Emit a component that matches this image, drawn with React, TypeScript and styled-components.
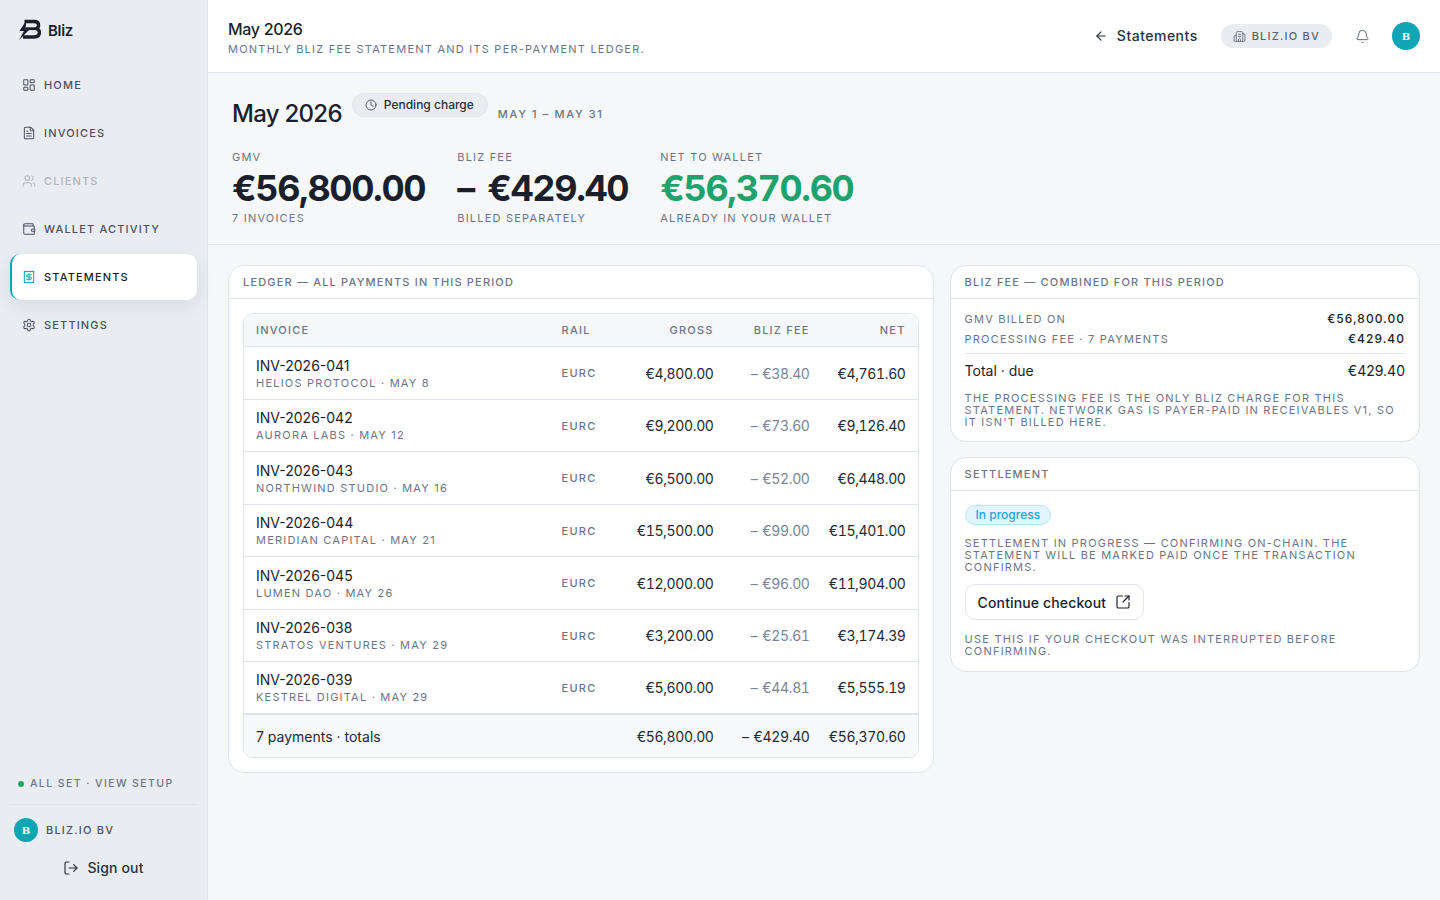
import styled, { createGlobalStyle } from "styled-components";
import {
  ArrowLeft,
  Bell,
  Building2,
  Clock,
  FileText,
  LayoutDashboard,
  LogOut,
  Receipt,
  Settings,
  SquareArrowOutUpRight,
  Users,
  Wallet,
} from "lucide-react";

const ink = "#1a1f2b";
const muted = "#6b7587";
const line = "#dfe4ec";
const teal = "#0ea5b5";
const sans = `"Inter", "Liberation Sans", sans-serif`;

const GlobalStyle = createGlobalStyle`
  html, body { margin: 0; height: 100%; }
  body {
    background: #f5f7f9;
    color: ${ink};
    font-family: ${sans};
    -webkit-font-smoothing: antialiased;
  }
  * { box-sizing: border-box; }
`;

const navItems = [
  { label: "Home", Icon: LayoutDashboard },
  { label: "Invoices", Icon: FileText },
  { label: "Clients", Icon: Users, disabled: true },
  { label: "Wallet activity", Icon: Wallet },
  { label: "Statements", Icon: Receipt, active: true },
  { label: "Settings", Icon: Settings },
];

const ledger = [
  ["INV-2026-041", "Helios Protocol · May 8", "€4,800.00", "– €38.40", "€4,761.60"],
  ["INV-2026-042", "Aurora Labs · May 12", "€9,200.00", "– €73.60", "€9,126.40"],
  ["INV-2026-043", "Northwind Studio · May 16", "€6,500.00", "– €52.00", "€6,448.00"],
  ["INV-2026-044", "Meridian Capital · May 21", "€15,500.00", "– €99.00", "€15,401.00"],
  ["INV-2026-045", "Lumen DAO · May 26", "€12,000.00", "– €96.00", "€11,904.00"],
  ["INV-2026-038", "Stratos Ventures · May 29", "€3,200.00", "– €25.61", "€3,174.39"],
  ["INV-2026-039", "Kestrel Digital · May 29", "€5,600.00", "– €44.81", "€5,555.19"],
];

const stats = [
  { label: "GMV", value: "€56,800.00", note: "7 invoices" },
  { label: "Bliz fee", value: "– €429.40", note: "Billed separately" },
  { label: "Net to wallet", value: "€56,370.60", note: "Already in your wallet", green: true },
];

const Logo = () => (
  <svg width="24" height="22" viewBox="0 0 24 22" fill="none">
    <path
      d="M6.5 2.5H16c3 0 4.6 1.4 4.6 3.7 0 1.7-1 2.9-2.4 3.4 2 .5 3.2 1.9 3.2 3.9 0 3-2.1 4.5-5.4 4.5H5"
      stroke="#1a1f2b"
      strokeWidth="3.4"
      strokeLinejoin="round"
    />
    <path d="M7.5 9.7H17" stroke="#1a1f2b" strokeWidth="2.8" />
    <path d="M8.5 1 1.5 12h4.5L1 21l11-11H7.5z" fill="#1a1f2b" />
  </svg>
);

export default function App() {
  return (
    <>
      <GlobalStyle />
      <Shell>
        <Sidebar>
          <Brand>
            <Logo />
            <BrandName>Bliz</BrandName>
          </Brand>
          <Nav>
            {navItems.map(({ label, Icon, active, disabled }) => (
              <NavItem key={label} $active={active} $disabled={disabled}>
                <Icon size={14} strokeWidth={1.75} />
                {label}
              </NavItem>
            ))}
          </Nav>
          <SetupLink>
            <GreenDot />
            All set · View setup
          </SetupLink>
          <SidebarFoot>
            <OrgRow>
              <Avatar>B</Avatar>
              <OrgName>BLIZ.IO BV</OrgName>
            </OrgRow>
            <SignOut>
              <LogOut size={16} strokeWidth={1.75} />
              Sign out
            </SignOut>
          </SidebarFoot>
        </Sidebar>
        <Main>
          <TopBar>
            <TopHeading>
              <TopTitle>May 2026</TopTitle>
              <TopSub>Monthly Bliz fee statement and its per-payment ledger.</TopSub>
            </TopHeading>
            <TopActions>
              <BackLink>
                <ArrowLeft size={14} strokeWidth={2} />
                Statements
              </BackLink>
              <OrgPill>
                <Building2 size={13} strokeWidth={1.5} />
                BLIZ.IO BV
              </OrgPill>
              <BellButton>
                <Bell size={15} strokeWidth={1.5} />
              </BellButton>
              <TopAvatar>B</TopAvatar>
            </TopActions>
          </TopBar>
          <Hero>
            <HeroHead>
              <HeroTitle>May 2026</HeroTitle>
              <PendingPill>
                <Clock size={12} strokeWidth={1.5} />
                Pending charge
              </PendingPill>
              <Period>May 1 – May 31</Period>
            </HeroHead>
            <Stats>
              {stats.map((s) => (
                <div key={s.label}>
                  <Caps>{s.label}</Caps>
                  <StatValue $green={s.green}>{s.value}</StatValue>
                  <Caps>{s.note}</Caps>
                </div>
              ))}
            </Stats>
          </Hero>
          <Content>
            <Card>
              <CardHead>Ledger — all payments in this period</CardHead>
              <LedgerBody>
                <LedgerTable>
                  <colgroup>
                    <col />
                    <RailCol />
                    <GrossCol />
                    <MoneyCol />
                    <MoneyCol />
                  </colgroup>
                  <thead>
                    <tr>
                      <Th>Invoice</Th>
                      <Th>Rail</Th>
                      <Th $right>Gross</Th>
                      <Th $right>Bliz fee</Th>
                      <Th $right>Net</Th>
                    </tr>
                  </thead>
                  <tbody>
                    {ledger.map(([id, client, gross, fee, net]) => (
                      <tr key={id}>
                        <InvoiceCell>
                          <InvoiceId>{id}</InvoiceId>
                          <InvoiceSub>{client}</InvoiceSub>
                        </InvoiceCell>
                        <RailCell>EURC</RailCell>
                        <MoneyCell>{gross}</MoneyCell>
                        <MoneyCell $muted>{fee}</MoneyCell>
                        <MoneyCell>{net}</MoneyCell>
                      </tr>
                    ))}
                  </tbody>
                  <tfoot>
                    <tr>
                      <FootCell colSpan={2}>7 payments · totals</FootCell>
                      <FootMoney>€56,800.00</FootMoney>
                      <FootMoney>– €429.40</FootMoney>
                      <FootMoney>€56,370.60</FootMoney>
                    </tr>
                  </tfoot>
                </LedgerTable>
              </LedgerBody>
            </Card>
            <SideColumn>
              <Card>
                <CardHead>Bliz fee — combined for this period</CardHead>
                <FeeBody>
                  <FeeRow>
                    <Caps>GMV billed on</Caps>
                    <FeeAmount>€56,800.00</FeeAmount>
                  </FeeRow>
                  <FeeRow>
                    <Caps>Processing fee · 7 payments</Caps>
                    <FeeAmount>€429.40</FeeAmount>
                  </FeeRow>
                  <TotalRow>
                    <span>Total · due</span>
                    <span>€429.40</span>
                  </TotalRow>
                  <Note>
                    The processing fee is the only Bliz charge for this statement. Network gas is
                    payer-paid in Receivables V1, so it isn't billed here.
                  </Note>
                </FeeBody>
              </Card>
              <Card>
                <CardHead>Settlement</CardHead>
                <SettleBody>
                  <ProgressPill>In progress</ProgressPill>
                  <Note>
                    Settlement in progress — confirming on-chain. The statement will be marked paid
                    once the transaction confirms.
                  </Note>
                  <CheckoutButton>
                    Continue checkout
                    <SquareArrowOutUpRight size={16} strokeWidth={1.75} />
                  </CheckoutButton>
                  <Note>Use this if your checkout was interrupted before confirming.</Note>
                </SettleBody>
              </Card>
            </SideColumn>
          </Content>
        </Main>
      </Shell>
    </>
  );
}

const Shell = styled.div`
  display: flex;
  min-height: 900px;
`;

const Sidebar = styled.aside`
  width: 208px;
  flex-shrink: 0;
  height: 900px;
  display: flex;
  flex-direction: column;
  padding: 18px 10px 24px;
  background: #e9edf1;
  border-right: 1px solid ${line};
`;

const Brand = styled.div`
  display: flex;
  align-items: center;
  gap: 6px;
  height: 24px;
  padding-left: 8px;
`;

const BrandName = styled.span`
  font-size: 15px;
  font-weight: 600;
  letter-spacing: -0.02em;
`;

const Nav = styled.nav`
  display: flex;
  flex-direction: column;
  gap: 2px;
  margin-top: 20px;
  flex: 1;
`;

const NavItem = styled.div<{ $active?: boolean; $disabled?: boolean }>`
  display: flex;
  align-items: center;
  gap: 8px;
  height: 46px;
  padding-left: ${(p) => (p.$active ? "10px" : "12px")};
  font-size: 11px;
  font-weight: 500;
  letter-spacing: 0.105em;
  text-transform: uppercase;
  border-radius: 10px;
  color: ${(p) => (p.$active ? ink : p.$disabled ? "#adb4c0" : "#4a5160")};
  background: ${(p) => (p.$active ? "#fff" : "transparent")};
  border-left: ${(p) => (p.$active ? `2px solid ${teal}` : "none")};
  box-shadow: ${(p) => (p.$active ? "0 6px 18px rgba(30, 40, 60, 0.08)" : "none")};

  svg {
    color: ${(p) => (p.$active ? teal : "currentColor")};
  }
`;

const SetupLink = styled.div`
  display: flex;
  align-items: center;
  gap: 6px;
  padding-left: 8px;
  margin-bottom: 14px;
  font-size: 10.5px;
  font-weight: 500;
  letter-spacing: 0.135em;
  text-transform: uppercase;
  color: ${muted};
`;

const GreenDot = styled.span`
  width: 6px;
  height: 6px;
  border-radius: 50%;
  background: #1fa868;
`;

const SidebarFoot = styled.div`
  border-top: 1px solid ${line};
  padding-top: 13px;
`;

const OrgRow = styled.div`
  display: flex;
  align-items: center;
  gap: 8px;
  padding-left: 4px;
`;

const Avatar = styled.div`
  width: 24px;
  height: 24px;
  border-radius: 50%;
  display: flex;
  align-items: center;
  justify-content: center;
  background: ${teal};
  color: #fff;
  font-family: "DejaVu Serif", serif;
  font-size: 10px;
  font-weight: 700;
`;

const OrgName = styled.span`
  font-size: 11px;
  font-weight: 500;
  letter-spacing: 0.11em;
  color: #4a5160;
`;

const SignOut = styled.div`
  display: flex;
  align-items: center;
  justify-content: center;
  gap: 8px;
  margin-top: 17px;
  font-size: 14px;
  font-weight: 500;
  letter-spacing: 0.01em;
  color: #2a303c;
`;

const Main = styled.main`
  flex: 1;
  min-width: 0;
`;

const TopBar = styled.header`
  height: 73px;
  display: flex;
  align-items: center;
  justify-content: space-between;
  padding: 0 20px;
  background: #fff;
  border-bottom: 1px solid ${line};
`;

const TopHeading = styled.div`
  padding-top: 2px;
`;

const TopTitle = styled.div`
  font-size: 16px;
  font-weight: 500;
  letter-spacing: -0.02em;
  line-height: 20px;
`;

const TopSub = styled.div`
  margin-top: 3px;
  font-size: 11px;
  letter-spacing: 0.112em;
  line-height: 14px;
  text-transform: uppercase;
  color: ${muted};
`;

const TopActions = styled.div`
  display: flex;
  align-items: center;
`;

const BackLink = styled.div`
  display: flex;
  align-items: center;
  gap: 9px;
  margin: 0 23px 1px 0;
  font-size: 14px;
  font-weight: 500;
  letter-spacing: 0.035em;
  color: #2a303c;
`;

const OrgPill = styled.div`
  display: flex;
  align-items: center;
  gap: 6px;
  height: 24px;
  padding: 0 12px;
  margin-right: 23px;
  border-radius: 12px;
  background: #e9edf1;
  font-size: 11px;
  font-weight: 500;
  letter-spacing: 0.11em;
  color: #5a6373;
`;

const BellButton = styled.div`
  display: flex;
  margin-right: 22px;
  color: #5a6373;
`;

const TopAvatar = styled(Avatar)`
  width: 28px;
  height: 28px;
`;

const Hero = styled.section`
  height: 172px;
  padding: 20px 24px 0;
  border-bottom: 1px solid ${line};
`;

const HeroHead = styled.div`
  display: flex;
  align-items: flex-start;
`;

const HeroTitle = styled.h1`
  margin: 6px 0 1px;
  font-size: 24px;
  font-weight: 500;
  letter-spacing: -0.03em;
  line-height: 30px;
`;

const PendingPill = styled.div`
  display: flex;
  align-items: center;
  gap: 7px;
  height: 24px;
  margin-left: 10px;
  padding: 0 13px 1px 12px;
  border-radius: 12px;
  background: #e9edf1;
  border: 1px solid #e2e6ec;
  font-size: 12px;
  font-weight: 500;
  color: #2a303c;
`;

const Period = styled.div`
  margin: 13px 0 0 10px;
  font-size: 11px;
  font-weight: 500;
  letter-spacing: 0.15em;
  line-height: 16px;
  text-transform: uppercase;
  color: ${muted};
`;

const Stats = styled.div`
  display: flex;
  gap: 32px;
  margin-top: 20px;
`;

const Caps = styled.div`
  font-size: 11px;
  letter-spacing: 0.11em;
  line-height: 14px;
  text-transform: uppercase;
  color: ${muted};
`;

const StatValue = styled.div<{ $green?: boolean }>`
  margin: 3px 0 2px;
  font-size: 36px;
  font-weight: 700;
  font-variant-numeric: tabular-nums;
  letter-spacing: -0.038em;
  word-spacing: 5px;
  line-height: 42px;
  color: ${(p) => (p.$green ? "#1fa26c" : ink)};
`;

const Content = styled.div`
  display: grid;
  grid-template-columns: 1.5fr 1fr;
  gap: 16px;
  align-items: start;
  padding: 20px;
`;

const SideColumn = styled.div`
  display: flex;
  flex-direction: column;
  gap: 15px;
`;

const Card = styled.section`
  background: #fff;
  border: 1px solid ${line};
  border-radius: 16px;
  overflow: hidden;
`;

const CardHead = styled.div`
  height: 33px;
  display: flex;
  align-items: center;
  padding: 0 14px;
  border-bottom: 1px solid ${line};
  font-size: 11px;
  font-weight: 500;
  letter-spacing: 0.107em;
  text-transform: uppercase;
  color: ${muted};
`;

const LedgerBody = styled.div`
  padding: 14px;
`;

const LedgerTable = styled.table`
  width: 100%;
  table-layout: fixed;
  border: 1px solid ${line};
  border-radius: 10px;
  border-spacing: 0;
  border-collapse: separate;
  overflow: hidden;
`;

const RailCol = styled.col`
  width: 75px;
`;

const GrossCol = styled.col`
  width: 101px;
`;

const MoneyCol = styled.col`
  width: 96px;
`;

const Th = styled.th<{ $right?: boolean }>`
  height: 33.3px;
  padding: 0 12px;
  background: #f5f7f9;
  border-bottom: 1px solid ${line};
  font-size: 11px;
  font-weight: 500;
  letter-spacing: 0.11em;
  text-transform: uppercase;
  text-align: ${(p) => (p.$right ? "right" : "left")};
  color: ${muted};
`;

const Td = styled.td`
  height: 52.5px;
  padding: 0 12px;
  border-bottom: 1px solid ${line};
  font-size: 14px;

  tr:last-child & {
    border-bottom-width: 2px;
  }
`;

const InvoiceCell = styled(Td)`
  padding-bottom: 2px;
`;

const RailCell = styled(Td)`
  font-size: 11px;
  font-weight: 500;
  letter-spacing: 0.11em;
  color: ${muted};
`;

const MoneyCell = styled(Td)<{ $muted?: boolean }>`
  padding-left: 0;
  text-align: right;
  font-variant-numeric: tabular-nums;
  letter-spacing: -0.025em;
  word-spacing: 1.5px;
  color: ${(p) => (p.$muted ? "#7c8596" : "#232936")};
`;

const InvoiceId = styled.div`
  margin-top: 2px;
  font-size: 14px;
  line-height: 18px;
  color: ${ink};
`;

const InvoiceSub = styled(Caps)`
  margin-top: 1px;
`;

const FootCell = styled.td`
  height: 42.7px;
  padding: 0 12px;
  background: #f8f9fb;
  font-size: 14px;
  color: #232936;
`;

const FootMoney = styled(FootCell)`
  padding-left: 0;
  text-align: right;
  font-variant-numeric: tabular-nums;
  letter-spacing: -0.025em;
  word-spacing: 1.5px;
`;

const FeeBody = styled.div`
  padding: 10px 14px 13px;
`;

const FeeRow = styled.div`
  display: flex;
  justify-content: space-between;
  align-items: center;
  height: 20px;
`;

const FeeAmount = styled.span`
  padding-bottom: 1px;
  font-size: 12px;
  font-weight: 500;
  letter-spacing: 0.085em;
  color: ${ink};
`;

const TotalRow = styled.div`
  display: flex;
  justify-content: space-between;
  align-items: center;
  height: 35px;
  margin-top: 4px;
  padding-bottom: 2px;
  border-top: 1px solid ${line};
  font-size: 14px;
  color: ${ink};
`;

const Note = styled.p`
  margin: 4px 0 0;
  font-size: 11px;
  letter-spacing: 0.11em;
  line-height: 12px;
  text-transform: uppercase;
  color: ${muted};
`;

const SettleBody = styled.div`
  display: flex;
  flex-direction: column;
  align-items: flex-start;
  padding: 14px;

  ${Note} {
    margin: 0;
  }
`;

const ProgressPill = styled.div`
  display: flex;
  align-items: center;
  height: 20px;
  padding: 0 10px 1px;
  margin-bottom: 12px;
  border-radius: 10px;
  background: #e3f4fc;
  border: 1px solid #b6e3f8;
  font-size: 12px;
  font-weight: 500;
  color: #1aa5e6;
`;

const CheckoutButton = styled.div`
  display: flex;
  align-items: center;
  gap: 9px;
  height: 36px;
  margin: 11px 0 13px;
  padding: 0 12px;
  border: 1px solid ${line};
  border-radius: 10px;
  background: #fff;
  font-size: 14px;
  font-weight: 500;
  letter-spacing: 0.01em;
  color: ${ink};
`;
